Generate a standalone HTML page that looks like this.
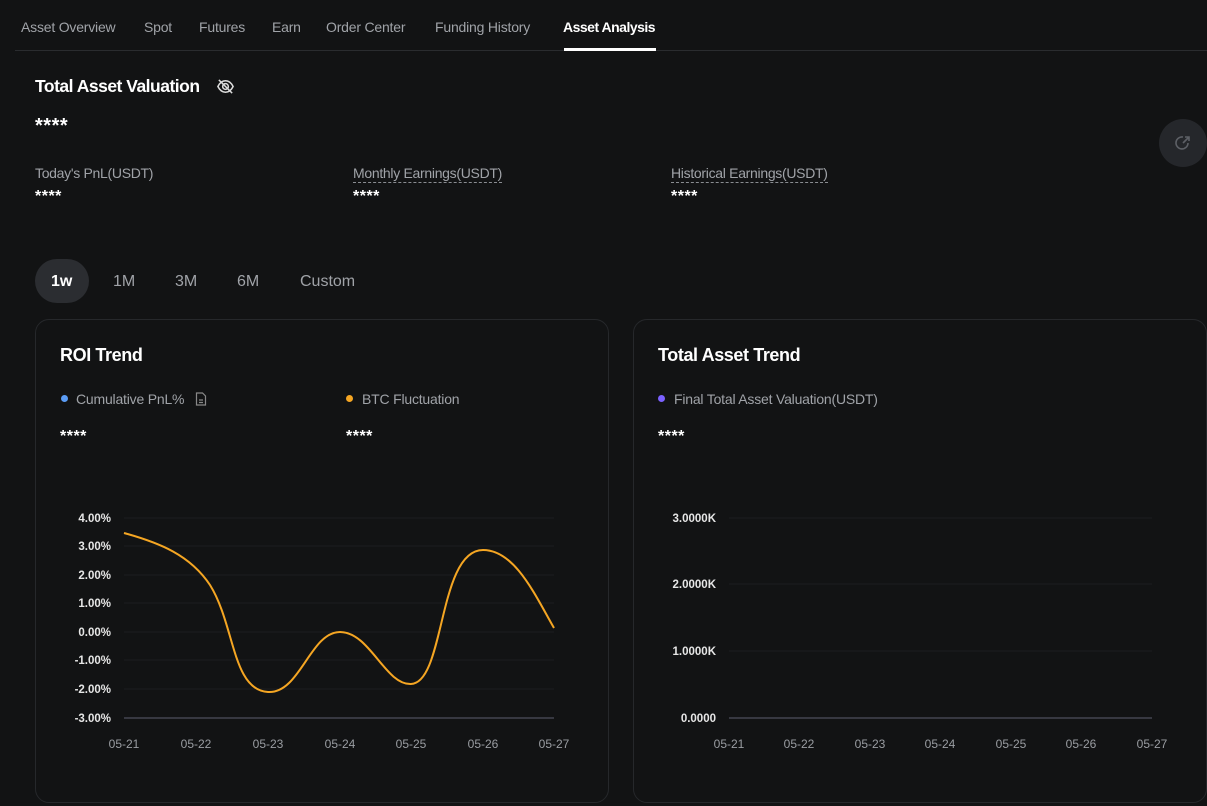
<!DOCTYPE html>
<html><head><meta charset="utf-8"><style>
*{margin:0;padding:0;box-sizing:border-box}
body{width:1207px;height:806px;background:#121314;font-family:"Liberation Sans",sans-serif;color:#fff;position:relative;overflow:hidden}
.a{position:absolute;white-space:nowrap}
.tab{font-size:14px;color:#a0a3a8;top:19px;letter-spacing:-0.2px}
.g{color:#a0a3a8}
.st{font-weight:bold;font-size:16px;letter-spacing:0.5px}
.dash{border-bottom:1px dashed #8a8d92;padding-bottom:1px}
.card{position:absolute;border:1px solid #26282b;border-radius:14px}
.ax{font-size:11.5px;fill:#e6e6e6;font-family:"Liberation Sans",sans-serif;font-weight:bold}
.xl{font-size:12px;fill:#9a9da2;font-family:"Liberation Sans",sans-serif}
</style></head><body>
<div class="a tab" style="left:21px">Asset Overview</div>
<div class="a tab" style="left:144px">Spot</div>
<div class="a tab" style="left:199px">Futures</div>
<div class="a tab" style="left:272px">Earn</div>
<div class="a tab" style="left:326px">Order Center</div>
<div class="a tab" style="left:435px">Funding History</div>
<div class="a tab" style="left:563px;color:#fff;font-weight:bold;letter-spacing:-0.5px">Asset Analysis</div>
<div class="a" style="left:15px;top:50px;width:1192px;height:1px;background:#2a2c2f"></div>
<div class="a" style="left:564px;top:48px;width:92px;height:3px;background:#fff"></div>

<div class="a" style="left:35px;top:76px;font-size:17.5px;font-weight:bold;letter-spacing:-0.5px">Total Asset Valuation</div>
<svg class="a" style="left:216px;top:77px" width="19" height="19" viewBox="0 0 20 20" fill="none" stroke="#ddd" stroke-width="1.6"><path d="M2 10c2-4 5-6 8-6s6 2 8 6c-2 4-5 6-8 6s-6-2-8-6z"/><circle cx="10" cy="10" r="3"/><path d="M3 3l14 14"/></svg>
<div class="a st" style="left:35px;top:115px;font-size:20px">****</div>

<div class="a g" style="left:35px;top:165px;font-size:14px;letter-spacing:-0.3px">Today's PnL(USDT)</div>
<div class="a st" style="left:35px;top:188px">****</div>
<div class="a g" style="left:353px;top:165px;font-size:14px;letter-spacing:-0.3px"><span class="dash">Monthly Earnings(USDT)</span></div>
<div class="a st" style="left:353px;top:188px">****</div>
<div class="a g" style="left:671px;top:165px;font-size:14px;letter-spacing:-0.3px"><span class="dash">Historical Earnings(USDT)</span></div>
<div class="a st" style="left:671px;top:188px">****</div>

<div class="a" style="left:1159px;top:119px;width:48px;height:48px;border-radius:50%;background:#25272b"></div>
<svg class="a" style="left:1173px;top:133px" width="20" height="20" viewBox="0 0 20 20" fill="none" stroke="#5d6066" stroke-width="1.6"><path d="M15 10a6 6 0 1 1-5-6"/><path d="M10 10l6-6M12 4h4v4"/></svg>

<div class="a" style="left:35px;top:259px;width:54px;height:44px;border-radius:22px;background:#2b2d31"></div>
<div class="a" style="left:51px;top:273px;font-size:16px;font-weight:bold">1w</div>
<div class="a g" style="left:113px;top:273px;font-size:16px">1M</div>
<div class="a g" style="left:175px;top:273px;font-size:16px">3M</div>
<div class="a g" style="left:237px;top:273px;font-size:16px">6M</div>
<div class="a g" style="left:300px;top:273px;font-size:16px">Custom</div>

<div class="card" style="left:35px;top:319px;width:574px;height:484px"></div>
<div class="card" style="left:633px;top:319px;width:574px;height:484px"></div>

<div class="a" style="left:60px;top:345px;font-size:18px;font-weight:bold;letter-spacing:-0.4px">ROI Trend</div>
<div class="a" style="left:61px;top:395px;width:7px;height:7px;border-radius:50%;background:#5b9cf6"></div>
<div class="a g" style="left:76px;top:391px;font-size:14px;letter-spacing:-0.2px">Cumulative PnL%</div>
<svg class="a" style="left:195px;top:392px" width="12" height="14" viewBox="0 0 12 14" fill="none" stroke="#888" stroke-width="1.2"><path d="M1.5 1h6l3 3v9h-9z"/><path d="M4 8h4M4 10.5h4"/></svg>
<div class="a" style="left:346px;top:395px;width:7px;height:7px;border-radius:50%;background:#f5a623"></div>
<div class="a g" style="left:362px;top:391px;font-size:14px;letter-spacing:-0.2px">BTC Fluctuation</div>
<div class="a st" style="left:60px;top:428px">****</div>
<div class="a st" style="left:346px;top:428px">****</div>

<div class="a" style="left:658px;top:345px;font-size:18px;font-weight:bold;letter-spacing:-0.4px">Total Asset Trend</div>
<div class="a" style="left:658px;top:395px;width:7px;height:7px;border-radius:50%;background:#7b61ff"></div>
<div class="a g" style="left:674px;top:391px;font-size:14px;letter-spacing:-0.2px">Final Total Asset Valuation(USDT)</div>
<div class="a st" style="left:658px;top:428px">****</div>

<svg class="a" style="left:0;top:0" width="1207" height="806">
<g stroke="#1c1e20" stroke-width="1">
<line x1="124" x2="554" y1="518" y2="518"/><line x1="124" x2="554" y1="546" y2="546"/><line x1="124" x2="554" y1="575" y2="575"/><line x1="124" x2="554" y1="603" y2="603"/><line x1="124" x2="554" y1="632" y2="632"/><line x1="124" x2="554" y1="660" y2="660"/><line x1="124" x2="554" y1="689" y2="689"/>
<line x1="729" x2="1152" y1="518" y2="518"/><line x1="729" x2="1152" y1="584" y2="584"/><line x1="729" x2="1152" y1="651" y2="651"/>
</g>
<line x1="124" x2="554" y1="718" y2="718" stroke="#5c5e6e"/>
<line x1="729" x2="1152" y1="718" y2="718" stroke="#5c5e6e"/>
<g class="ax" text-anchor="end">
<text x="111" y="522">4.00%</text><text x="111" y="550">3.00%</text><text x="111" y="579">2.00%</text><text x="111" y="607">1.00%</text><text x="111" y="636">0.00%</text><text x="111" y="664">-1.00%</text><text x="111" y="693">-2.00%</text><text x="111" y="722">-3.00%</text>
<text x="716" y="522">3.0000K</text><text x="716" y="588">2.0000K</text><text x="716" y="655">1.0000K</text><text x="716" y="722">0.0000</text>
</g>
<g class="xl" text-anchor="middle">
<text x="124" y="748">05-21</text><text x="196" y="748">05-22</text><text x="268" y="748">05-23</text><text x="340" y="748">05-24</text><text x="411" y="748">05-25</text><text x="483" y="748">05-26</text><text x="554" y="748">05-27</text>
<text x="729" y="748">05-21</text><text x="799" y="748">05-22</text><text x="870" y="748">05-23</text><text x="940" y="748">05-24</text><text x="1011" y="748">05-25</text><text x="1081" y="748">05-26</text><text x="1152" y="748">05-27</text>
</g>
<path d="M124 533 C160 543 190 555 210 585 C235 625 232 690 268 692 C300 694 310 632 340 632 C370 632 385 685 411 684 C445 683 438 550 483 550 C515 550 535 595 554 628" fill="none" stroke="#f5a623" stroke-width="2"/>
</svg>
</body></html>
